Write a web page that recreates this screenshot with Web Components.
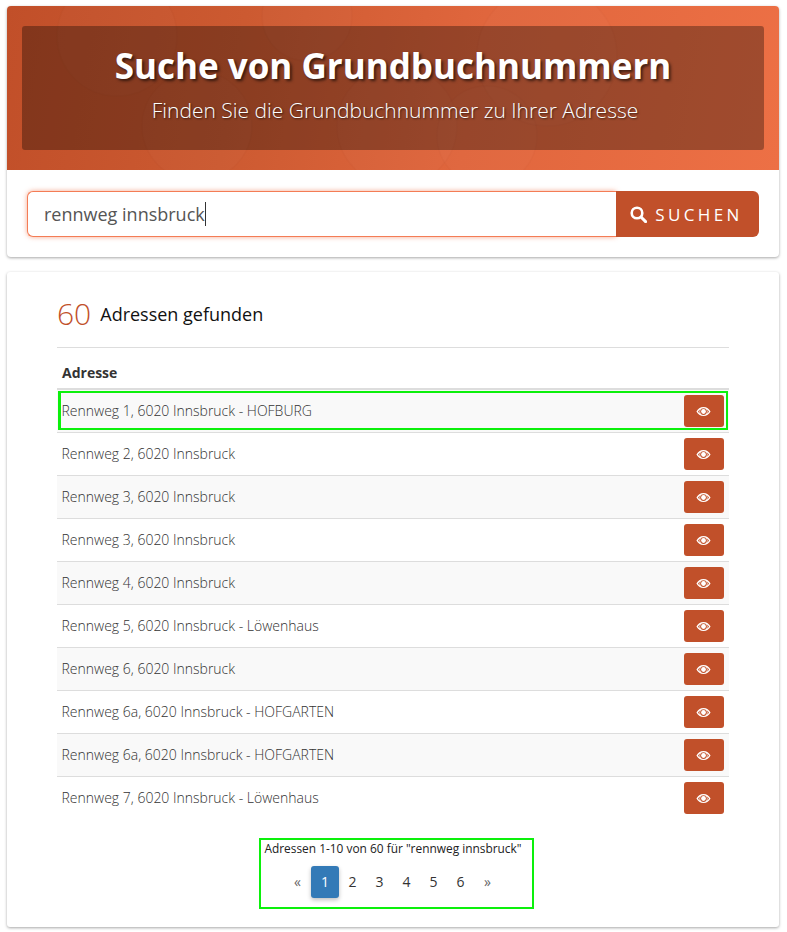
<!DOCTYPE html>
<html lang="de"><head><meta charset="utf-8"><title>Grundbuch</title>
<style>
html,body{margin:0;background:#fff;height:932px;overflow:hidden}
body{padding:6px 8px 0 7px;box-sizing:border-box;font-family:"Open Sans",sans-serif;color:#333;display:flex;flex-direction:column;gap:15px}
</style></head><body>
<search-card></search-card>
<result-card count="60">
  <address-row hl>Rennweg 1, 6020 Innsbruck - HOFBURG</address-row>
  <address-row>Rennweg 2, 6020 Innsbruck</address-row>
  <address-row>Rennweg 3, 6020 Innsbruck</address-row>
  <address-row>Rennweg 3, 6020 Innsbruck</address-row>
  <address-row>Rennweg 4, 6020 Innsbruck</address-row>
  <address-row>Rennweg 5, 6020 Innsbruck - Löwenhaus</address-row>
  <address-row>Rennweg 6, 6020 Innsbruck</address-row>
  <address-row>Rennweg 6a, 6020 Innsbruck - HOFGARTEN</address-row>
  <address-row>Rennweg 6a, 6020 Innsbruck - HOFGARTEN</address-row>
  <address-row>Rennweg 7, 6020 Innsbruck - Löwenhaus</address-row>
</result-card>
<script>
const def=(n,html)=>customElements.define(n,class extends HTMLElement{constructor(){super();this.attachShadow({mode:'open'}).innerHTML=html;}});
def('search-card',`<style>
:host{display:block;height:251px;background:#fff;border-radius:4px;box-shadow:0 1px 3px rgba(0,0,0,.35);overflow:hidden;box-sizing:border-box}
.hero{height:164px;box-sizing:border-box;padding:20px 15px;position:relative;background:linear-gradient(100deg,#c14f29 0%,#cc5a31 30%,#e0663d 60%,#ed7045 100%)}
.hero svg{position:absolute;inset:0;width:100%;height:100%}
.panel{position:relative;height:124px;box-sizing:border-box;background:rgba(0,0,0,.32);border-radius:3px;text-align:center;color:#fff;padding-top:14px}
h1{margin:0;font:700 35px/52px "Open Sans",sans-serif;text-shadow:2px 2px 3px rgba(0,0,0,.6)}
p{margin:4px 0 0;padding-left:4px;font:300 21px/28px "Open Sans",sans-serif;text-shadow:1px 1px 2px rgba(0,0,0,.6)}
form{display:flex;padding:21px 20px 0 20px;height:46px;margin:0}
.input{flex:1;box-sizing:border-box;border:1px solid #f47c55;border-right:0;border-radius:6px 0 0 6px;box-shadow:0 0 5px rgba(240,112,70,.6);font-size:18px;padding-left:16px;color:#555;background:#fff;display:flex;align-items:center}
.caret{display:inline-block;width:1px;height:24px;background:#333}
.btn{position:relative;width:143px;box-sizing:border-box;background:#c1502a;color:#fff;border-radius:0 6px 6px 0;display:flex;align-items:center;justify-content:center;gap:8px;font-size:17px;font-weight:500;letter-spacing:3.4px;padding-right:2px}
.btn svg{width:17px;height:17px;position:static}
</style>
<div class="hero"><svg viewBox="0 0 772 164" preserveAspectRatio="none" fill="rgba(255,255,255,.015)" stroke="rgba(0,0,0,.012)" stroke-width="2"><circle cx="110" cy="30" r="60"/><circle cx="190" cy="120" r="55"/><circle cx="540" cy="50" r="70"/><circle cx="480" cy="130" r="50"/><circle cx="300" cy="10" r="45"/><circle cx="390" cy="120" r="60"/></svg>
<div class="panel"><h1>Suche von Grundbuchnummern</h1><p>Finden Sie die Grundbuchnummer zu Ihrer Adresse</p></div></div>
<form><div class="input"><span>rennweg innsbruck</span><span class="caret"></span></div>
<div class="btn"><svg viewBox="0 0 17 17" fill="none" stroke="#fff" stroke-width="2.6"><circle cx="7" cy="7" r="5.3"/><path d="M11 11l4.600 4.600" stroke-linecap="round" stroke-width="3"/></svg><span>SUCHEN</span></div></form>`);
def('result-card',`<style>
:host{display:block;height:655px;background:#fff;border-radius:3px;box-shadow:0 1px 3px rgba(0,0,0,.35);box-sizing:border-box;padding:24px 50px 0;position:relative}
.head{display:flex;align-items:flex-start;gap:9px;height:51px;border-bottom:1px solid #ddd}
.n{font:300 30px/36px "Open Sans",sans-serif;color:#c1502a}
.t{font:400 18px/36px "Open Sans",sans-serif;color:#111}
.th{font-weight:700;font-size:14px;line-height:20px;color:#333;padding:15px 5px 5px;border-bottom:2px solid #ddd}
.pager{margin-top:20px;text-align:center;font-size:11.9px;line-height:16px;color:#222;position:relative}
nav{display:flex;justify-content:center;align-items:center;margin-top:10px;margin-left:-1px;font-size:14px;color:#333}
nav span{width:27px;height:32px;line-height:32px;text-align:center;box-sizing:border-box}
nav .cur{background:#337ab7;color:#fff;border-radius:3px;box-shadow:0 2px 4px rgba(0,0,0,.25);width:28px}
nav .mut{color:#666}
.box{position:absolute;border:2px solid #0cf00c;box-sizing:border-box;pointer-events:none}
</style>
<div class="head"><span class="n">60</span><span class="t">Adressen gefunden</span></div>
<div class="th">Adresse</div>
<slot></slot>
<div class="pager">Adressen 1-10 von 60 für "rennweg innsbruck"
<nav><span class="mut">«</span><span class="cur">1</span><span>2</span><span>3</span><span>4</span><span>5</span><span>6</span><span class="mut">»</span></nav></div>
<div class="box" style="left:252px;top:566px;width:275px;height:71px"></div>`);
def('address-row',`<style>
:host{display:flex;align-items:center;justify-content:space-between;height:43px;box-sizing:border-box;border-bottom:1px solid #ddd;padding:0 5px;font-size:14px;font-weight:300;color:#333;position:relative}
:host(:nth-of-type(odd)){background:#f9f9f9}
:host(:last-of-type){border-bottom-color:transparent}
.txt{position:relative;top:-1px;left:-.5px}
.b{width:40px;height:32px;background:#c1502a;border-radius:3px;display:flex;align-items:center;justify-content:center}
svg{width:15px;height:11px;margin-left:-2px}
.hl{display:none;position:absolute;left:1px;top:1px;right:1px;height:39px;border:2px solid #0cf00c;border-left-width:3px;box-sizing:border-box}
:host([hl]) .hl{display:block}
</style><span class="txt"><slot></slot></span><span class="b"><svg viewBox="0 0 16 12"><path fill="#fff" fill-rule="evenodd" d="M8 1C4.500 1 1.800 3.300.3 6c1.500 2.700 4.200 5 7.700 5s6.200-2.300 7.700-5C14.200 3.300 11.500 1 8 1zM8 2.400A3.700 3.700 0 1 1 8 9.800 3.700 3.700 0 0 1 8 2.400zM2 6c.6-.9 1.300-1.700 2.200-2.300A4.800 4.800 0 0 0 4.200 8.300 7 7 0 0 1 2 6zm12 0a7 7 0 0 1-2.200 2.300A4.800 4.800 0 0 0 11.800 3.700 7 7 0 0 1 14 6z"/><circle cx="8" cy="6" r="2.600" fill="#fff"/></svg></span><span class="hl"></span>`);
</script>
</body></html>
